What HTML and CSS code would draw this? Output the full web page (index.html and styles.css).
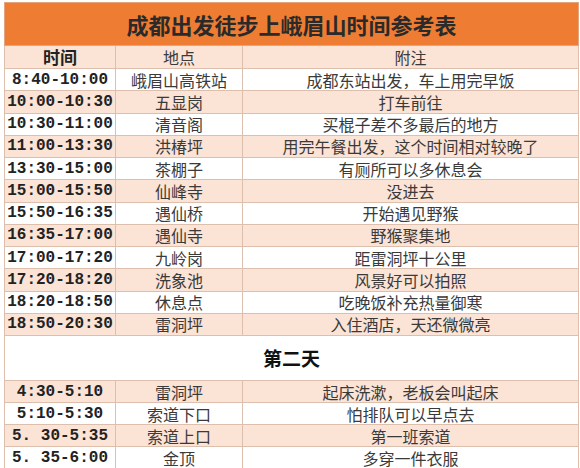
FILE: index.html
```html
<!DOCTYPE html>
<html lang="zh-CN">
<head>
<meta charset="utf-8">
<link rel="stylesheet" href="styles.css">
</head>
<body>
<table class="plan">
  <colgroup>
    <col class="c-time">
    <col class="c-place">
    <col class="c-note">
  </colgroup>
  <tr class="title"><td colspan="3">成都出发徒步上峨眉山时间参考表</td></tr>
  <tr class="head peach"><td class="time">时间</td><td>地点</td><td>附注</td></tr>
  <tr class="row"><td class="time">8:40-10:00</td><td>峨眉山高铁站</td><td>成都东站出发，车上用完早饭</td></tr>
  <tr class="row peach"><td class="time">10:00-10:30</td><td>五显岗</td><td>打车前往</td></tr>
  <tr class="row"><td class="time">10:30-11:00</td><td>清音阁</td><td>买棍子差不多最后的地方</td></tr>
  <tr class="row peach"><td class="time">11:00-13:30</td><td>洪椿坪</td><td>用完午餐出发，这个时间相对较晚了</td></tr>
  <tr class="row"><td class="time">13:30-15:00</td><td>茶棚子</td><td>有厕所可以多休息会</td></tr>
  <tr class="row peach"><td class="time">15:00-15:50</td><td>仙峰寺</td><td>没进去</td></tr>
  <tr class="row"><td class="time">15:50-16:35</td><td>遇仙桥</td><td>开始遇见野猴</td></tr>
  <tr class="row peach"><td class="time">16:35-17:00</td><td>遇仙寺</td><td>野猴聚集地</td></tr>
  <tr class="row"><td class="time">17:00-17:20</td><td>九岭岗</td><td>距雷洞坪十公里</td></tr>
  <tr class="row peach"><td class="time">17:20-18:20</td><td>洗象池</td><td>风景好可以拍照</td></tr>
  <tr class="row"><td class="time">18:20-18:50</td><td>休息点</td><td>吃晚饭补充热量御寒</td></tr>
  <tr class="row peach"><td class="time">18:50-20:30</td><td>雷洞坪</td><td>入住酒店，天还微微亮</td></tr>
  <tr class="day"><td colspan="3">第二天</td></tr>
  <tr class="row2 peach"><td class="time">4:30-5:10</td><td>雷洞坪</td><td>起床洗漱，老板会叫起床</td></tr>
  <tr class="row2"><td class="time">5:10-5:30</td><td>索道下口</td><td>怕排队可以早点去</td></tr>
  <tr class="row2 peach"><td class="time">5. 30-5:35</td><td>索道上口</td><td>第一班索道</td></tr>
  <tr class="row2"><td class="time">5. 35-6:00</td><td>金顶</td><td>多穿一件衣服</td></tr>
</table>
</body>
</html>
```

FILE: styles.css
```css
html, body {
  margin: 0;
  padding: 0;
  background: #ffffff;
}

body {
  padding: 2px 0 0 4px;
  font-family: "Noto Sans CJK SC", "Noto Sans", sans-serif;
  color: #3a3a3a;
}

.plan {
  width: 574px;
  table-layout: fixed;
  border-collapse: collapse;
}

.c-time { width: 111px; }
.c-place { width: 127px; }
.c-note { width: 336px; }

.plan td {
  border: 1px solid #dcc0ad;
  padding: 0;
  text-align: center;
  vertical-align: middle;
  white-space: nowrap;
  overflow: hidden;
  font-size: 16px;
  line-height: 18px;
}

.title td {
  height: 42px;
  background: #ee7d33;
  border-color: #e3a57d;
  font-size: 22px;
  font-weight: bold;
  color: #2a2a2a;
  line-height: 26px;
}

.head td {
  height: 22px;
}

.head .time {
  font-family: "Noto Sans CJK SC", sans-serif;
  font-weight: bold;
  font-size: 17px;
}

.row td {
  height: 21.25px;
}

.row2 td {
  height: 21px;
}

.peach td {
  background: #fbe3d5;
}

.time {
  font-family: "Liberation Mono", "DejaVu Sans Mono", monospace;
  font-weight: bold;
  font-size: 14px;
  color: #222222;
}

.day td {
  height: 44px;
  background: #ffffff;
  font-size: 19px;
  font-weight: bold;
  color: #111111;
}
```
